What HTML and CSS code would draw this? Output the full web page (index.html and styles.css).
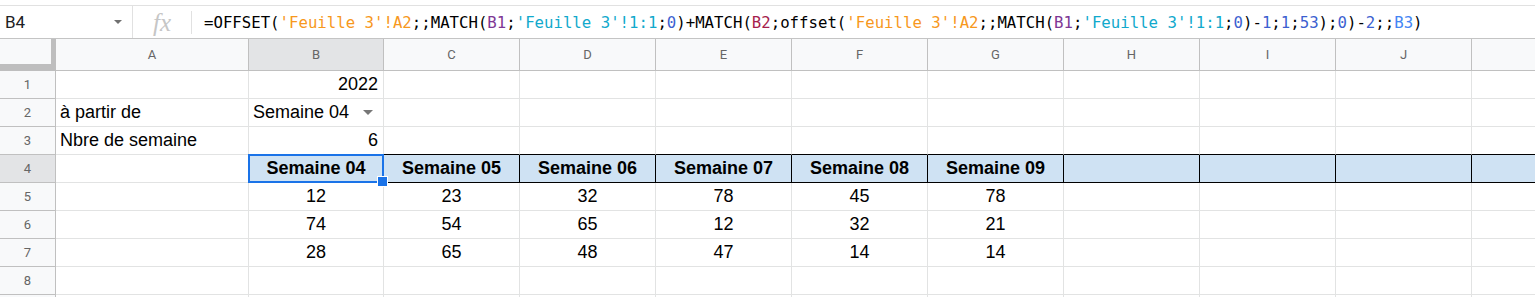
FILE: index.html
```html
<!DOCTYPE html>
<html lang="fr">
<head>
    <meta charset="UTF-8">
    <title>Feuille</title>
    <link rel="stylesheet" href="styles.css">
</head>
<body>
    <div class="formula-bar">
        <div class="name-box"><span>B4</span><span class="caret"></span></div>
        <div class="fx">fx</div>
        <div class="divider"></div>
        <div class="formula">=OFFSET(<span class="ref-o">'Feuille 3'!A2</span>;;MATCH(<span class="ref-p">B1</span>;<span class="ref-c">'Feuille 3'!1:1</span>;<span class="num">0</span>)+MATCH(<span class="ref-r">B2</span>;offset(<span class="ref-o">'Feuille 3'!A2</span>;;MATCH(<span class="ref-p">B1</span>;<span class="ref-c">'Feuille 3'!1:1</span>;<span class="num">0</span>)-<span class="num">1</span>;<span class="num">1</span>;<span class="num">53</span>);<span class="num">0</span>)-<span class="num">2</span>;;<span class="ref-b">B3</span>)</div>
    </div>

    <div class="sheet">
        <!-- column headers -->
        <div class="cell corner"></div>
        <div class="cell hd">A</div>
        <div class="cell hd sel">B</div>
        <div class="cell hd">C</div>
        <div class="cell hd">D</div>
        <div class="cell hd">E</div>
        <div class="cell hd">F</div>
        <div class="cell hd">G</div>
        <div class="cell hd">H</div>
        <div class="cell hd">I</div>
        <div class="cell hd">J</div>
        <div class="cell hd"></div>

        <!-- row 1 -->
        <div class="cell rh">1</div>
        <div class="cell"></div>
        <div class="cell r">2022</div>
        <div class="cell"></div><div class="cell"></div><div class="cell"></div><div class="cell"></div>
        <div class="cell"></div><div class="cell"></div><div class="cell"></div><div class="cell"></div><div class="cell"></div>

        <!-- row 2 -->
        <div class="cell rh">2</div>
        <div class="cell">à partir de</div>
        <div class="cell dropdown"><span>Semaine 04</span><span class="arrow"></span></div>
        <div class="cell"></div><div class="cell"></div><div class="cell"></div><div class="cell"></div>
        <div class="cell"></div><div class="cell"></div><div class="cell"></div><div class="cell"></div><div class="cell"></div>

        <!-- row 3 -->
        <div class="cell rh">3</div>
        <div class="cell">Nbre de semaine</div>
        <div class="cell r above">6</div>
        <div class="cell above"></div><div class="cell above"></div><div class="cell above"></div><div class="cell above"></div>
        <div class="cell above"></div><div class="cell above"></div><div class="cell above"></div><div class="cell above"></div><div class="cell above"></div>

        <!-- row 4 -->
        <div class="cell rh sel">4</div>
        <div class="cell"></div>
        <div class="cell wk active">Semaine 04</div>
        <div class="cell wk">Semaine 05</div>
        <div class="cell wk">Semaine 06</div>
        <div class="cell wk">Semaine 07</div>
        <div class="cell wk">Semaine 08</div>
        <div class="cell wk">Semaine 09</div>
        <div class="cell wk"></div><div class="cell wk"></div><div class="cell wk"></div><div class="cell wk"></div>

        <!-- row 5 -->
        <div class="cell rh">5</div>
        <div class="cell"></div>
        <div class="cell c">12</div>
        <div class="cell c">23</div>
        <div class="cell c">32</div>
        <div class="cell c">78</div>
        <div class="cell c">45</div>
        <div class="cell c">78</div>
        <div class="cell"></div><div class="cell"></div><div class="cell"></div><div class="cell"></div>

        <!-- row 6 -->
        <div class="cell rh">6</div>
        <div class="cell"></div>
        <div class="cell c">74</div>
        <div class="cell c">54</div>
        <div class="cell c">65</div>
        <div class="cell c">12</div>
        <div class="cell c">32</div>
        <div class="cell c">21</div>
        <div class="cell"></div><div class="cell"></div><div class="cell"></div><div class="cell"></div>

        <!-- row 7 -->
        <div class="cell rh">7</div>
        <div class="cell"></div>
        <div class="cell c">28</div>
        <div class="cell c">65</div>
        <div class="cell c">48</div>
        <div class="cell c">47</div>
        <div class="cell c">14</div>
        <div class="cell c">14</div>
        <div class="cell"></div><div class="cell"></div><div class="cell"></div><div class="cell"></div>

        <!-- row 8 -->
        <div class="cell rh">8</div>
        <div class="cell"></div><div class="cell"></div><div class="cell"></div><div class="cell"></div><div class="cell"></div><div class="cell"></div>
        <div class="cell"></div><div class="cell"></div><div class="cell"></div><div class="cell"></div><div class="cell"></div>

        <!-- row 9 (only its top edge shows) -->
        <div class="cell rh"></div>
        <div class="cell"></div><div class="cell"></div><div class="cell"></div><div class="cell"></div><div class="cell"></div><div class="cell"></div>
        <div class="cell"></div><div class="cell"></div><div class="cell"></div><div class="cell"></div><div class="cell"></div>
    </div>
</body>
</html>
```

FILE: styles.css
```css
* {
    box-sizing: border-box;
}
body {
    margin: 0;
    background: #fff;
    font-family: 'Liberation Sans', Arial, sans-serif;
    color: #000;
    overflow: hidden;
}

/* formula bar */
.formula-bar {
    margin-top: 5px;
    height: 34px;
    display: flex;
    align-items: center;
    border-top: 1px solid #e1e1e1;
    border-bottom: 1px solid #c4c4c4;
    white-space: nowrap;
}
.name-box {
    width: 133px;
    height: 100%;
    display: flex;
    align-items: center;
    justify-content: space-between;
    padding: 0 10px 0 5px;
    border-right: 1px solid #e1e1e1;
    font-family: Roboto, sans-serif;
    font-size: 17px;
    color: #202124;
}
.caret {
    width: 0;
    height: 0;
    border-left: 4px solid transparent;
    border-right: 4px solid transparent;
    border-top: 4px solid #707070;
}
.fx {
    width: 58px;
    text-align: center;
    font-family: 'Liberation Serif', serif;
    font-style: italic;
    font-size: 25px;
    color: #c6c6c6;
    line-height: 1;
}
.divider {
    width: 1px;
    height: 23px;
    background: #e1e1e1;
}
.formula {
    padding-left: 12px;
    font-family: 'DejaVu Sans Mono', monospace;
    font-size: 15.7px;
    color: #000;
}
.ref-o { color: #f7981d; }
.ref-p { color: #7e3794; }
.ref-c { color: #11a9cc; }
.ref-r { color: #a61d4c; }
.ref-b { color: #4285f4; }
.num { color: #3c5fd0; }

/* grid */
.sheet {
    display: grid;
    grid-template-columns: 56px 193px 135px repeat(9, 136px);
    grid-template-rows: 32px;
    grid-auto-rows: 28px;
    height: 258px;
    overflow: hidden;
}
.cell {
    border-right: 1px solid #e2e3e3;
    border-bottom: 1px solid #e2e3e3;
    padding: 0 4px;
    font-size: 18px;
    display: flex;
    align-items: center;
    white-space: nowrap;
    overflow: hidden;
}
.cell.r {
    justify-content: flex-end;
    padding-right: 5px;
}
.cell.c {
    justify-content: center;
}
.hd, .rh, .corner {
    background: #f8f9fa;
    border-color: #c0c0c0;
    font-family: Roboto, sans-serif;
    font-size: 13px;
    color: #666;
    justify-content: center;
}
.sel {
    background: #e3e4e6;
}
.corner {
    border-right: 5px solid #bebebe;
    border-bottom: 7px solid #bebebe;
}
.dropdown {
    justify-content: space-between;
    padding-right: 10px;
}
.arrow {
    width: 0;
    height: 0;
    border-left: 5px solid transparent;
    border-right: 5px solid transparent;
    border-top: 5px solid #777;
}
.above {
    border-bottom-color: #000;
}
.wk {
    background: #cfe2f3;
    border-right-color: #000;
    border-bottom-color: #000;
    font-weight: bold;
    justify-content: center;
}
.active {
    position: relative;
    overflow: visible;
}
.active::after {
    content: "";
    position: absolute;
    inset: -1px;
    border: 2px solid #1a73e8;
    z-index: 2;
}
.active::before {
    content: "";
    position: absolute;
    right: -5px;
    bottom: -5px;
    width: 9px;
    height: 9px;
    background: #1a73e8;
    border: 1px solid #fff;
    z-index: 3;
}
```
